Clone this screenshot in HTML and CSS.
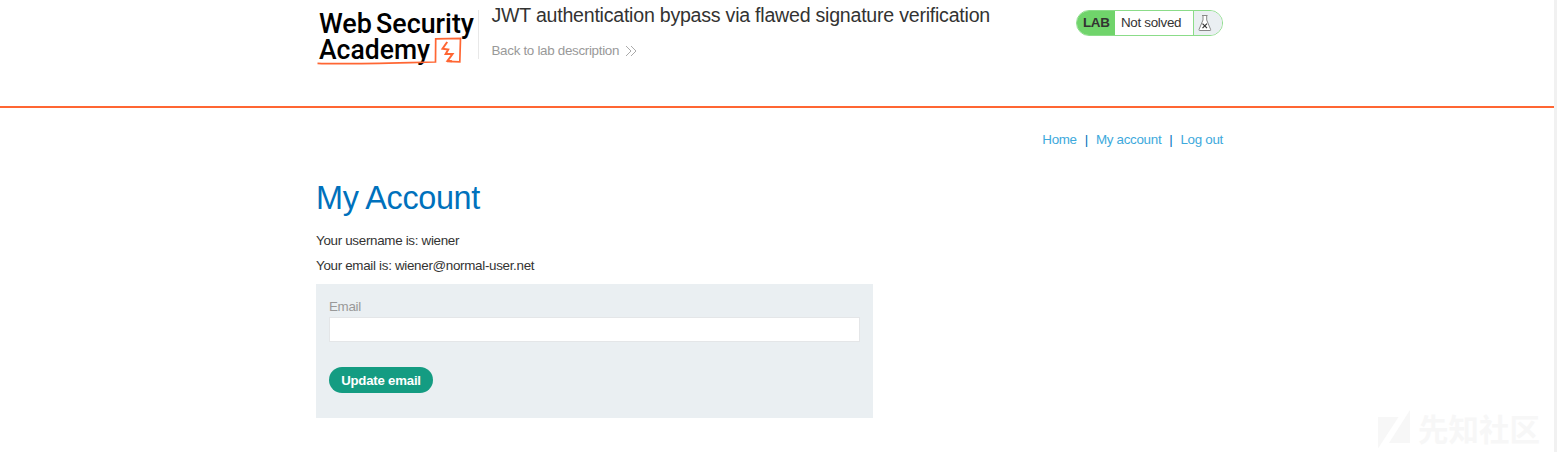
FILE: index.html
```html
<!DOCTYPE html>
<html lang="en">
<head>
<meta charset="utf-8">
<title>JWT authentication bypass via flawed signature verification</title>
<link rel="stylesheet" href="styles.css">
</head>
<body>
<div class="page">
  <header class="lab-header">
    <div class="container header-row">
      <svg class="logo" width="162" height="64" viewBox="314 6 162 64">
        <text class="logo-text" y="32.5"><tspan x="319" textLength="53" lengthAdjust="spacingAndGlyphs">Web</tspan><tspan x="376" textLength="98" lengthAdjust="spacingAndGlyphs">Security</tspan></text>
        <text class="logo-text" x="319" y="58.5" textLength="111" lengthAdjust="spacingAndGlyphs">Academy</text>
        <path class="logo-line" d="M317.500 63.300C345 64.500 400 62.700 435.500 62L435.700 38.800L460.500 38.300L459.800 61.800L447 61.400"/>
        <path class="logo-bolt" d="M447.200 42L442.500 48.700L448.200 49.600L445.700 54L452.500 54L447.500 60.800L452 61.200"/>
      </svg>
      <div class="title-block">
        <h2 class="title">JWT authentication bypass via flawed signature verification</h2>
        <a class="back">Back to lab description<svg class="chevrons" width="12" height="12" viewBox="0 0 12 12"><path d="M1 1L6 6L1 11M6 1L11 6L6 11"/></svg></a>
      </div>
      <div class="status">
        <span class="status-tag">LAB</span>
        <span class="status-text">Not solved</span>
        <span class="status-icon"><svg width="14" height="18" viewBox="0 0 14 18"><path class="flask" d="M4 1.500H9.500M5 1.500V6L1 15.500Q.7 16.500 1.700 16.500H12Q13 16.500 12.600 15.500L8.700 6V1.500"/><path class="cross" d="M4.500 9.700L9 14.200M9 9.700L4.500 14.200"/></svg></span>
      </div>
    </div>
  </header>
  <main class="container">
    <nav class="nav"><a>Home</a><span>|</span><a>My account</a><span>|</span><a>Log out</a></nav>
    <h1 class="heading">My Account</h1>
    <p class="line">Your username is: wiener</p>
    <p class="line">Your email is: wiener@normal-user.net</p>
    <form class="form">
      <label class="label" for="email">Email</label>
      <input class="input" id="email" type="email">
      <button class="button" type="button">Update email</button>
    </form>
  </main>
</div>
<div class="scrollbar"></div>
<div class="watermark">
  <svg width="32" height="40" viewBox="0 0 32 40"><path d="M0 7H20.500L0 38.500ZM32 0V33H11Z"/></svg>
  <span>先知社区</span>
</div>
</body>
</html>
```
FILE: styles.css
```css
* { box-sizing: border-box; }
body {
  margin: 0;
  height: 452px;
  overflow: hidden;
  display: flex;
  background: #fff;
  color: #333332;
  font: 13.4px/16px "Liberation Sans", Arial, sans-serif;
  letter-spacing: -.31px;
}
.page { flex: 1; }
.scrollbar { width: 3px; background: #f1f1f1; }
.container { width: 907px; margin-left: 316px; }
.lab-header { height: 108px; border-bottom: 2px solid #ff6633; }
.header-row { display: flex; align-items: flex-start; }
.logo { margin: 6px 0 0 -2px; flex: none; overflow: visible; }
.logo-text { font: 500 28.5px Roboto, sans-serif; letter-spacing: 0; fill: #000; }
.logo-line, .logo-bolt { fill: none; stroke: #ff6633; stroke-width: 1.7; }
.logo-bolt { stroke-width: 2; }
.title-block {
  margin: 10px 0 0 2px;
  height: 49px;
  padding-left: 12.500px;
  border-left: 1px solid #e8e8e8;
}
.title { margin: -7px 0 0; font-size: 19.6px; letter-spacing: -.24px; line-height: 24px; font-weight: 400; white-space: nowrap; }
.back { display: flex; align-items: center; margin-top: 16px; color: #999; }
.chevrons { margin-left: 6px; fill: none; stroke: #aaa; stroke-width: 1; }
.status {
  display: flex;
  width: 147px;
  height: 26px;
  margin: 10px 0 0 auto;
  border: 1px solid #8bdc89;
  border-radius: 13px;
  overflow: hidden;
  line-height: 24px;
}
.status-tag { width: 38px; padding-left: 6px; background: #70d46b; font-weight: 700; }
.status-text { flex: 1; padding-left: 6px; }
.status-icon { width: 29px; padding: 3px 0 0 4px; border-left: 1px solid #8bdc89; background: #eaeff2; line-height: 0; }
.flask { fill: #fff; stroke: #888; stroke-width: 1; }
.cross { fill: none; stroke: #333; stroke-width: 1.2; }
.nav { display: flex; justify-content: flex-end; gap: 8px; margin-top: 24px; color: #0071bc; }
.nav a { color: #3da9dc; }
.heading { margin: 30px 0 15px; color: #0071bc; font-size: 32.4px; letter-spacing: -.35px; line-height: 40px; font-weight: 400; }
.line { margin: 0 0 9px; }
.form { width: 557px; height: 134px; margin-top: 10px; padding: 15px 13px; background: #eaeff2; }
.label { display: block; color: #999; }
.input { display: block; width: 531px; height: 25px; margin-top: 2px; border: 1px solid #e4e6e8; background: #fff; }
.button {
  display: block;
  width: 104px;
  height: 26px;
  margin-top: 25px;
  padding: 0;
  border: 0;
  border-radius: 13px;
  background: #149c82;
  color: #fff;
  font: 700 13.2px "Liberation Sans", Arial, sans-serif;
  letter-spacing: -.2px;
}
.watermark {
  position: absolute;
  left: 1378px;
  top: 410px;
  display: flex;
  align-items: center;
  gap: 8px;
  color: #f7f7f7;
  font: 700 30.5px/34px "Noto Sans CJK SC", sans-serif;
  letter-spacing: 0;
}
.watermark span { margin-top: -4px; }
.watermark svg { fill: #f7f7f7; }
```
